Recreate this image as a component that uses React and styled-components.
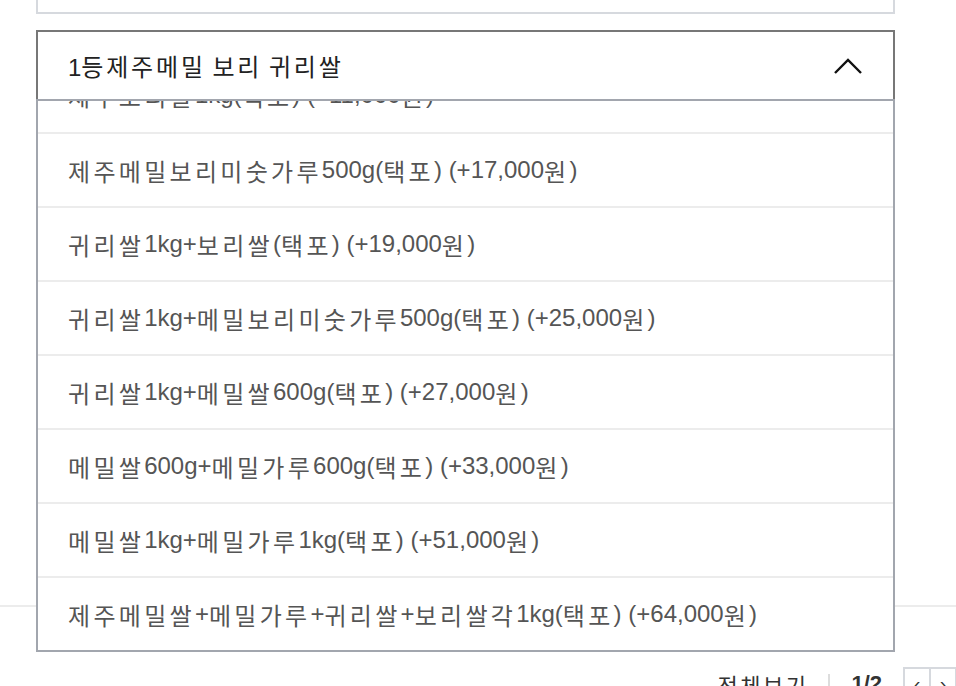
import React, { useLayoutEffect, useRef } from 'react';
import styled, { createGlobalStyle } from 'styled-components';

const GlobalStyle = createGlobalStyle`
  html, body {
    margin: 0;
    padding: 0;
    background: #fff;
    overflow: hidden;
  }
  body {
    font-family: "Liberation Sans", "Noto Sans CJK KR", sans-serif;
  }
`;

const options = [
  '제주보리쌀1kg(택포) (+11,000원)',
  '제주메밀보리미숫가루500g(택포) (+17,000원)',
  '귀리쌀1kg+보리쌀(택포) (+19,000원)',
  '귀리쌀1kg+메밀보리미숫가루500g(택포) (+25,000원)',
  '귀리쌀1kg+메밀쌀600g(택포) (+27,000원)',
  '메밀쌀600g+메밀가루600g(택포) (+33,000원)',
  '메밀쌀1kg+메밀가루1kg(택포) (+51,000원)',
  '제주메밀쌀+메밀가루+귀리쌀+보리쌀 각1kg(택포) (+64,000원)',
];

const Page = styled.div`
  width: 956px;
  height: 686px;
  overflow: hidden;
`;

const Inner = styled.div`
  width: 859px;
  margin-left: 36px;
`;

const ProductBox = styled.div`
  height: 12px;
  border: 2px solid #d6d9de;
  border-top: none;
`;

const SelectWrap = styled.div`
  position: relative;
  margin-top: 16px;
`;

const SelectHead = styled.div`
  height: 69px;
  box-sizing: border-box;
  border: 2px solid #777;
  border-bottom: none;
  display: flex;
  align-items: center;
  justify-content: space-between;
  padding: 0 31px 0 30px;
  color: #222;
  font-size: 24px;
`;

const Chevron = styled.svg`
  width: 28px;
  height: 16px;
  margin-top: 1px;
`;

// Hangul in the reference sets wider than the CJK font gives, so space it out
const Hangul = styled.span`
  font-family: "Noto Sans CJK KR", sans-serif;
  letter-spacing: ${p => p.spread || '3.3px'};
`;

const Label = ({ text, spread }) =>
  text.split(/([\uAC00-\uD7A3]+)/).map((part, i) =>
    /[\uAC00-\uD7A3]/.test(part)
      ? <Hangul key={i} spread={spread}>{part}</Hangul>
      : part
  );

const OptionList = styled.ul`
  position: absolute;
  top: 69px;
  left: 0;
  right: 0;
  height: 553px;
  margin: 0;
  padding: 0;
  list-style: none;
  box-sizing: border-box;
  border: 2px solid #a2a6ae;
  background: #fff;
  overflow-y: auto;
  scrollbar-width: none;
  z-index: 2;
  &::-webkit-scrollbar { display: none; }
`;

const OptionItem = styled.li`
  height: 74px;
  box-sizing: border-box;
  display: flex;
  align-items: center;
  padding: 0 0 0 30px;
  border-top: ${p => (p.first ? 'none' : '2px solid #ececec')};
  color: #555;
  font-size: 24px;
  white-space: nowrap;
`;

const Divider = styled.div`
  margin-top: 506px;
  height: 2px;
  background: #ececec;
`;

const Pager = styled.div`
  display: flex;
  align-items: center;
  justify-content: flex-end;
  width: 957px;
  margin-top: 60px;
  font-size: 22px;
  color: #333;
`;

const PagerBar = styled.span`
  width: 2px;
  height: 20px;
  background: #ddd;
  margin: 0 21px 0 20px;
`;

const PagerCount = styled.span`
  font-weight: 700;
  margin-right: 21px;
`;

const PagerButton = styled.button`
  width: 28px;
  height: 34px;
  border: 2px solid #d6d9de;
  margin-left: ${p => (p.joined ? '-2px' : '0')};
  background: #fff;
  padding: 0;
  font-size: 20px;
  color: #333;
  line-height: 1;
`;

export default function App() {
  const listRef = useRef(null);

  useLayoutEffect(() => {
    if (listRef.current) listRef.current.scrollTop = 43;
  }, []);

  return (
    <Page>
      <GlobalStyle />
      <Inner>
        <ProductBox />
        <SelectWrap>
          <SelectHead>
            <span><Label text="1등제주메밀 보리 귀리쌀" spread="2.8px" /></span>
            <Chevron viewBox="0 0 28 16" fill="none">
              <polyline points="1,15 14,2 27,15" stroke="#111" strokeWidth="2.4" />
            </Chevron>
          </SelectHead>
          <OptionList ref={listRef}>
            {options.map((o, i) => (
              <OptionItem key={o} first={i === 0}><Label text={o} /></OptionItem>
            ))}
          </OptionList>
        </SelectWrap>
      </Inner>
      <Divider />
      <Pager>
        <span><Label text="전체보기" spread="2.5px" /></span>
        <PagerBar />
        <PagerCount>1/2</PagerCount>
        <PagerButton>‹</PagerButton>
        <PagerButton joined>›</PagerButton>
      </Pager>
    </Page>
  );
}
